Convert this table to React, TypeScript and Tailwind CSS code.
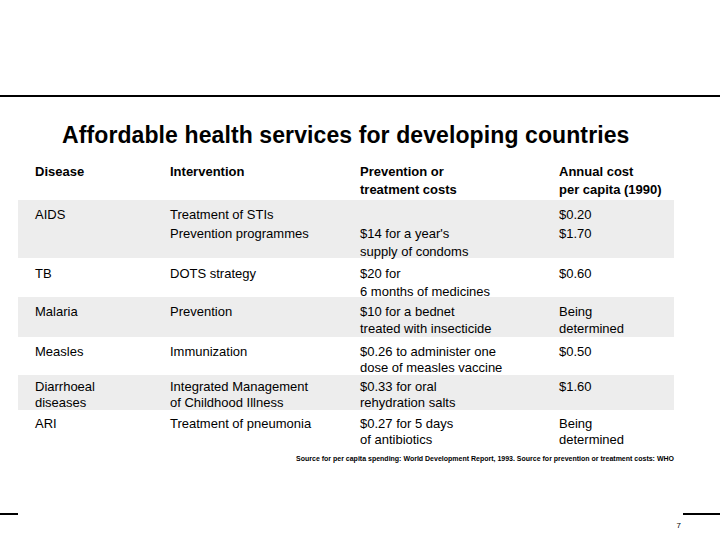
const rows = [
	{
		disease: ["AIDS"],
		intervention: ["Treatment of STIs", "Prevention programmes"],
		prevention: ["", "$14 for a year's", "supply of condoms"],
		cost: ["$0.20", "$1.70"],
		shade: true,
		h: "h-[58px]",
		pt: "pt-[6px]",
		lead: "leading-[18.5px]",
	},
	{
		disease: ["TB"],
		intervention: ["DOTS strategy"],
		prevention: ["$20 for", "6 months of medicines"],
		cost: ["$0.60"],
		shade: false,
		h: "h-[39px]",
		pt: "pt-[7px]",
		lead: "leading-[18px]",
	},
	{
		disease: ["Malaria"],
		intervention: ["Prevention"],
		prevention: ["$10 for a bednet", "treated with insecticide"],
		cost: ["Being", "determined"],
		shade: true,
		h: "h-[40px]",
		pt: "pt-[6px]",
		lead: "leading-[17px]",
	},
	{
		disease: ["Measles"],
		intervention: ["Immunization"],
		prevention: ["$0.26 to administer one", "dose of measles vaccine"],
		cost: ["$0.50"],
		shade: false,
		h: "h-[38px]",
		pt: "pt-[7px]",
		lead: "leading-[16px]",
	},
	{
		disease: ["Diarrhoeal", "diseases"],
		intervention: ["Integrated Management", "of Childhood Illness"],
		prevention: ["$0.33 for oral", "rehydration salts"],
		cost: ["$1.60"],
		shade: true,
		h: "h-[35px]",
		pt: "pt-[4px]",
		lead: "leading-[16px]",
	},
	{
		disease: ["ARI"],
		intervention: ["Treatment of pneumonia"],
		prevention: ["$0.27 for 5 days", "of antibiotics"],
		cost: ["Being", "determined"],
		shade: false,
		h: "h-[40px]",
		pt: "pt-[6px]",
		lead: "leading-[16px]",
	},
];

const Cell = ({ lines, w, pl }: { lines: string[]; w: string; pl?: string }) => (
	<div className={`${w} ${pl ?? ""} shrink-0`}>
		{lines.map((l, i) => (
			<div key={i} className="whitespace-nowrap h-[1lh]">
				{l}
			</div>
		))}
	</div>
);

export default function App() {
	return (
		<div
			className="w-[720px] h-[540px] bg-white text-black overflow-hidden flex flex-col"
			style={{ fontFamily: '"Liberation Sans", Arial, sans-serif' }}
		>
			<div className="h-[95px]" />
			<div className="h-[2px] bg-black" />

			<h1 className="pl-[62px] pt-[24px] text-[23px] font-bold leading-[28px] tracking-[0.1px]">
				Affordable health services for developing countries
			</h1>

			<div className="ml-[18px] w-[656px] mt-[14px] text-[13px]">
				{/* header */}
				<div className="flex font-bold leading-[18px] h-[37px]">
					<Cell lines={["Disease"]} w="w-[152px]" pl="pl-[17px]" />
					<Cell lines={["Intervention"]} w="w-[190px]" />
					<Cell lines={["Prevention or", "treatment costs"]} w="w-[199px]" />
					<Cell lines={["Annual cost", "per capita (1990)"]} w="w-[115px]" />
				</div>

				{rows.map((r, i) => (
					<div
						key={i}
						className={`flex ${r.h} ${r.pt} ${r.lead} ${r.shade ? "bg-[#ededed]" : ""}`}
					>
						<Cell lines={r.disease} w="w-[152px]" pl="pl-[17px]" />
						<Cell lines={r.intervention} w="w-[190px]" />
						<Cell lines={r.prevention} w="w-[199px]" />
						<Cell lines={r.cost} w="w-[115px]" />
					</div>
				))}

				<div className="mt-[5px] text-right text-[7px] font-bold leading-[8px] whitespace-nowrap">
					Source for per capita spending: World Development Report, 1993. Source for prevention or treatment costs: WHO
				</div>
			</div>

			<div className="mt-[50px] flex items-start">
				<div className="w-[18px] h-[2px] bg-black" />
				<div className="flex-1" />
				<div className="text-[8px] leading-[8px] mt-[9px] mr-[2px]">7</div>
				<div className="w-[37px] h-[2px] bg-black" />
			</div>
		</div>
	);
}
